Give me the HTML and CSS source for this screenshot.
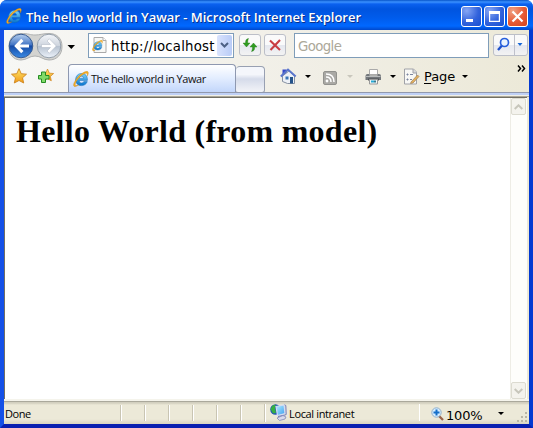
FILE: index.html
```html
<!DOCTYPE html>
<html lang="en">
<head>
<meta charset="utf-8">
<title>The hello world in Yawar</title>
<link rel="stylesheet" href="styles.css">
</head>
<body>
<svg class="defs" width="0" height="0" aria-hidden="true">
  <defs>
    <linearGradient id="eb" x1="0" y1="0" x2="0" y2="1"><stop offset="0" stop-color="#7cd4fa"/><stop offset="1" stop-color="#0874cf"/></linearGradient>
    <linearGradient id="blue" x1="0" y1="0" x2="0" y2="1"><stop offset="0" stop-color="#b8d0ee"/><stop offset=".45" stop-color="#4275c5"/><stop offset=".5" stop-color="#164ba6"/><stop offset="1" stop-color="#3a8be5"/></linearGradient>
    <linearGradient id="silver" x1="0" y1="0" x2="0" y2="1"><stop offset="0" stop-color="#f5f7fa"/><stop offset=".5" stop-color="#ccd3dd"/><stop offset=".52" stop-color="#b7c2d0"/><stop offset="1" stop-color="#edf3fb"/></linearGradient>
    <linearGradient id="gold" x1="0" y1="0" x2="0" y2="1"><stop offset="0" stop-color="#ffe76d"/><stop offset="1" stop-color="#f19a16"/></linearGradient>
    <linearGradient id="screen" x1="0" y1="0" x2="1" y2="1"><stop offset="0" stop-color="#b5efff"/><stop offset="1" stop-color="#3b9df0"/></linearGradient>
    <symbol id="ie" viewBox="0 0 16 16">
      <path d="M14.300 10.600c-1 2.600-3 4-5.900 4-3.600 0-5.800-2.300-5.800-5.800 0-3.700 2.400-6.300 6-6.300 4 0 6.100 2.700 5.800 6.900H6.200c.1 1.600 1 2.600 2.500 2.600 1 0 1.700-.4 2.100-1.400zM6.300 7.200h4.200c-.1-1.300-.8-2-2-2-1.200 0-2 .8-2.200 2z" fill="url(#eb)" stroke="#176bb4" stroke-width=".5"/>
      <path d="M14.300 5.200c1.300-2.400 1.400-4 .3-4.700C12.700-.4 6.700 3.300 3.500 7.800.8 11.600-.2 14.500 1.100 15.400c1 .6 2.900-.2 4.700-1.600-1.600.7-3 1-3.400.5-.7-.9.500-3.500 2.700-6.200 2.800-3.500 6.900-6.400 8.500-5.800.8.300.9 1.400.7 2.900z" fill="#f6ae24" stroke="#bb7b0f" stroke-width=".3"/>
    </symbol>
    <symbol id="star" viewBox="0 0 16 16"><path d="M8 .7l2.200 5 5.300.5-4 3.600 1.200 5.200L8 12.500 3.300 15l1.200-5.200-4-3.600 5.300-.5z" fill="url(#gold)" stroke="#ce841e" stroke-width=".9"/></symbol>
    <symbol id="down" viewBox="0 0 6 3"><path d="M0 0h6L3 3z" fill="currentColor"/></symbol>
  </defs>
</svg>
<div class="window">
  <header class="title">
    <svg class="title-ie" width="16" height="16"><use href="#ie"/></svg>
    <span class="title-text">The hello world in Yawar - Microsoft Internet Explorer</span>
    <div class="controls">
      <button class="min"><svg width="19" height="19"><path d="M4 12h7v3H4z" fill="#fff"/></svg></button>
      <button><svg width="19" height="19"><path d="M4 4h11v11H4zM5.200 7v6.800h8.600V7z" fill="#fff" fill-rule="evenodd"/></svg></button>
      <button class="close"><svg width="19" height="19"><path d="M4.500 4.500l10 10m0-10l-10 10" stroke="#fff" stroke-width="2.200"/></svg></button>
    </div>
  </header>
  <div class="frame">
    <div class="toolbars">
      <div class="nav">
        <svg class="travel" width="68" height="29">
          <path d="M13 1.500C21 1.500 22 3 27 3s8-1.500 14-1.500c8 0 13 5 13 13S49 28 41 28c-6 0-8-4-14-4s-8 4-14 4C5 28 1 22 1 14.500S5 1.500 13 1.500z" fill="#d3d3d0" stroke="#aeb0b0"/>
          <circle cx="13" cy="14" r="11.800" fill="url(#blue)" stroke="#385c93"/>
          <circle cx="41" cy="14" r="11.800" fill="url(#silver)" stroke="#95a0ac"/>
          <path d="M21 12.500v3h-9l3.500 3.500-2.300 2.200-7-7.200 7-7.200L15.500 9 12 12.500z" fill="#fff"/>
          <path d="M33.500 12.500v3h9L39 19l2.300 2.200 7-7.200-7-7.200L39 9l3.500 3.500z" fill="#fff" stroke="#aab3c0" stroke-width=".5"/>
          <path d="M59.500 13h7.500l-3.700 4z" fill="#000"/>
        </svg>
        <div class="address">
          <svg width="16" height="17"><path d="M2 .5h9l3 3v12H2z" fill="#f8f8f5" stroke="#aaa"/><path d="M11 .5v3h3" fill="#fff" stroke="#aaa"/><use href="#ie" x="0" y="3" width="11" height="11"/></svg>
          <span>http://localhost</span>
          <b><svg width="9" height="7"><path d="M1 1l3.500 3.500L8 1" fill="none" stroke="#4d6185" stroke-width="2"/></svg></b>
        </div>
        <button class="tool refresh"><svg width="16" height="16"><path d="M6.500 1.500C4.300 1.800 3.500 3 3.500 6H1l3.500 4L8 6H5.700c0-2 .2-3 .8-4.500zM9.500 14.500c2.300-.3 3.200-1.500 3.200-4.500H15l-3.500-4L8 10h2.500c0 2-.3 3-1 4.500z" fill="#2f9d20" stroke="#23731a" stroke-width=".4"/></svg></button>
        <button class="tool stop"><svg width="16" height="16"><path d="M3 3.500l10 9.500M13 3L3.500 13" stroke="#c93d42" stroke-width="2.100"/></svg></button>
        <div class="search">Google</div>
        <button class="find"><svg width="35" height="22"><path d="M21.500 1v20" stroke="#bfc1cb"/><path d="M8.800 11.800L5 16" stroke="#1d50cb" stroke-width="2.400"/><circle cx="11.500" cy="8.500" r="4" fill="#eaf4ff" stroke="#2860dc" stroke-width="1.700"/><path d="M24.500 9h5l-2.500 3z" fill="#1766d5"/></svg></button>
      </div>
      <div class="tabs">
        <svg class="star" width="16" height="16"><use href="#star"/></svg>
        <svg class="plus" width="17" height="17"><use href="#star" x="3" y="0" width="13" height="14"/><path d="M3.500 4h4v3.500H11V11H7.500v3.500h-4V11H.5V7.500h3z" fill="#80db68" stroke="#258c23"/></svg>
        <div class="tab"><svg width="16" height="16"><use href="#ie"/></svg><span>The hello world in Yawar</span></div>
        <div class="newtab"></div>
        <svg class="home" width="17" height="17"><path d="M2.500 1.500h4V6h-4z" fill="#3448c8"/><path d="M2.500 8L9 3l5.500 5v7.500h-7l-5-2z" fill="#edf1f7" stroke="#8791a2"/><path d="M.8 8.500L8 1.500l7.700 7" fill="none" stroke="#5a76cc" stroke-width="2"/><path d="M10 9h3v6.500h-3z" fill="#24538a"/><path d="M5.500 8.500h3v3h-3z" fill="#3976b8"/></svg>
        <svg class="arrow" width="6" height="3"><use href="#down"/></svg>
        <svg class="rss" width="14" height="14"><rect x=".5" y=".5" width="13" height="13" rx="1.500" fill="#aaa9a5" stroke="#92928e"/><circle cx="4" cy="10" r="1.400" fill="#fff"/><path d="M3 6c3 0 5 2 5 5M3 3c5 0 8 3 8 8" fill="none" stroke="#fff" stroke-width="1.500"/></svg>
        <svg class="arrow pale" width="6" height="3"><use href="#down"/></svg>
        <svg class="printer" width="17" height="17"><path d="M4.500 1.500h8v5h-8z" fill="#fff" stroke="#aaa"/><path d="M.5 8q0-2 2-2h2v1.500h8V6h1.500q2 0 2 2v4H.5z" fill="#73777b"/><path d="M1 8.500h14.500" stroke="#b8bbbc"/><path d="M3 10.500h11v2H3z" fill="#4c5054"/><path d="M4.500 11.500h8v4.500h-8z" fill="#f2f7f7" stroke="#999"/><path d="M6 13.500h3" stroke="#27a9d5" stroke-width="2"/><path d="M9 13.500h2" stroke="#347c92" stroke-width="2"/></svg>
        <svg class="arrow" width="6" height="3"><use href="#down"/></svg>
        <svg class="pageicon" width="17" height="17"><path d="M1.500 1h9l3 3v12h-12z" fill="#f8f8f5" stroke="#a0a2a8"/><path d="M10 1v4h4" fill="#d8d9dd" stroke="#a0a2a8"/><path d="M4 6h1v1H4zm0 5h1v1H4zM7 6.500h3m-3 5h2" fill="#65779c" stroke="#7c86a0"/><path d="M8 14l6.500-7L16 8.500l-6 6.500-2.500.5z" fill="#e4b15c" stroke="#9c8160" stroke-width=".7"/></svg>
        <span class="page-label"><u>P</u>age</span>
        <svg class="arrow" width="6" height="3"><use href="#down"/></svg>
        <svg class="more" width="9" height="7"><path d="M1 .5l2.500 3L1 6.500M5 .5l2.500 3L5 6.500" fill="none" stroke="#000" stroke-width="1.500"/></svg>
      </div>
    </div>
    <div class="band"></div>
    <main>
      <article><h1>Hello World (from model)</h1></article>
      <div class="scroll">
        <div><svg width="9" height="6"><path d="M.7 5L4.500 1.300 8.300 5" fill="none" stroke="#c7c6bb" stroke-width="2"/></svg></div>
        <div><svg width="9" height="6"><path d="M.7 1l3.800 3.700L8.300 1" fill="none" stroke="#c7c6bb" stroke-width="2"/></svg></div>
      </div>
    </main>
    <footer>
      <span class="done">Done</span><i></i><i></i><i></i><i></i><i></i><i></i>
      <div class="zone">
        <svg width="17" height="17"><circle cx="5.500" cy="5.500" r="5.300" fill="#2454b8"/><path d="M.5 5l2-3.500L6 .5 5 4l1 5-3 .5z" fill="#35b043"/><path d="M6 2.500L14 1l1 8.500-7.500 2z" fill="url(#screen)" stroke="#d3dcf3" stroke-width="1.200"/><path d="M14.500.8l1.300.7.400 9-1.200.5L8 12.500" fill="none" stroke="#7078bc"/><path d="M7 14l6-2.500 3 1.500-1 2-5.500 1.500z" fill="#d8daec" stroke="#8088b8" stroke-width=".8"/></svg>
        <span>Local intranet</span>
      </div>
      <div class="zoom">
        <svg width="13" height="14"><path d="M7.500 8.500l4.500 4.500" stroke="#99634a" stroke-width="2.300"/><circle cx="5.500" cy="5.500" r="4.700" fill="#d5edff" stroke="#91afc9"/><path d="M5.500 2.500v6m-3-3h6" stroke="#146fc9" stroke-width="2"/></svg>
        <span>100%</span>
        <svg class="arrow" width="6" height="3"><use href="#down"/></svg>
      </div>
      <svg class="grip" width="12" height="12"><path d="M9 1h2v2H9zM5 5h2v2H5zM9 5h2v2H9zM1 9h2v2H1zM5 9h2v2H5zM9 9h2v2H9z" fill="#b9b6a5"/></svg>
    </footer>
  </div>
</div>
</body>
</html>
```
FILE: styles.css
```css
* { box-sizing: border-box; }
body { margin: 0; background: #fff; overflow: hidden; }
svg { display: block; flex: none; }
button { padding: 0; margin: 0; }
.defs { position: absolute; }
.window { width: 533px; height: 428px; display: flex; flex-direction: column; border-radius: 7px 7px 0 0; overflow: hidden; background: #064be0; }
.title { height: 30px; flex: none; display: flex; padding-left: 6px; background: linear-gradient(#0754c9 0, #3b91ff 2px, #0b61ef 4px, #0054df 9px, #005cec 18px, #0068ff 26px, #0048cc 30px); }
.title-ie { margin-top: 8px; }
.title-text { margin-left: 4px; width: 350px; font: 600 13px/34px "Open Sans", sans-serif; letter-spacing: -.015px; color: #fff; text-shadow: 1px 1px #0a318c; white-space: nowrap; }
.controls { margin: 6px 5px 0 auto; display: flex; gap: 2px; }
.controls button { width: 21px; height: 21px; border: 1px solid #fff; border-radius: 3px; background: radial-gradient(circle at 25% 20%, #86a6f4, #3263dc 55%, #164ed1); }
.controls .close { background: radial-gradient(circle at 25% 20%, #f0a083, #e65a35 55%, #d2441c); }
.frame { flex: 1; border: solid; border-width: 0 4px 4px; border-color: #0831d9 #0339d1 #081fb0 #1450e7; background: #ece9d8; display: flex; flex-direction: column; min-height: 0; }
.toolbars { height: 62px; flex: none; background: linear-gradient(90deg, #f7f7f5, #f1efe7 55%, #ece9d8); }
.nav { height: 31px; display: flex; align-items: flex-start; padding: 2px 1px 0 4px; }
.travel { margin-right: 12px; }
.address { width: 146px; height: 25px; margin-top: 1px; border: 1px solid #7f9db9; background: #fff; display: flex; padding: 3px 1px 1px 3px; font: 13.300px/18px "DejaVu Sans", sans-serif; color: #000; }
.address span { width: 106px; margin-left: 3px; padding-top: 1px; letter-spacing: .2px; white-space: nowrap; }
.address b { width: 15px; height: 21px; margin: -2px 0 0 auto; background: linear-gradient(90deg, #d9e3fd, #b9ccf7); border-radius: 2px; display: grid; place-items: center; }
.tool, .find { height: 22px; margin-top: 2px; border: 1px solid #bcbfc8; border-radius: 3px; background: linear-gradient(#fafafa 48%, #e4e7ef 50%, #f3f3f3); }
.tool { width: 22px; display: grid; place-items: center; }
.refresh { margin-left: 5px; }
.stop { margin-left: 3px; }
.search { width: 195px; height: 25px; margin: 1px 4px 0 8px; padding-left: 3px; border: 1px solid #7f9db9; background: #fff; color: #aca899; font: 13.300px/25px "DejaVu Sans", sans-serif; letter-spacing: -.6px; }
.find { width: 35px; }
.find svg { margin: -1px; }
.tabs { height: 31px; display: flex; padding-left: 7px; }
.star { margin-top: 7px; }
.plus { margin: 7px 0 0 11px; }
.tab { width: 168px; height: 30px; margin: 3px 0 0 13px; padding: 6px 0 0 4px; display: flex; border: 1px solid #8e98b0; border-bottom: 0; border-radius: 4px 4px 0 0; background: linear-gradient(#fff, #e3edff 45%, #bed3fa); font: 11px/16px "Open Sans", sans-serif; color: #111; }
.tab span { margin-left: 2px; letter-spacing: -.45px; white-space: nowrap; }
.newtab { width: 29px; height: 27px; margin: 5px 0 0; border: 1px solid #98a0b2; border-left: 0; border-radius: 4px 4px 3px 3px; background: linear-gradient(#f4f6fb 30%, #d5dbea 48%, #f3f4f8); }
.home { margin: 7px 0 0 15px; }
.arrow { margin-top: 14px; margin-left: 8px; color: #000; }
.pale { color: #c9c7bd; margin-left: 10px; }
.rss { margin: 10px 0 0 12px; }
.printer { margin: 7px 0 0 12px; }
.pageicon { margin: 7px 0 0 7px; }
.page-label { width: 34px; margin-left: 4px; font: 13px/32px "DejaVu Sans", sans-serif; letter-spacing: -.1px; white-space: nowrap; }
.page-label + .arrow { margin-left: 4px; }
.page-label u { text-underline-offset: 2px; }
.more { margin: 4px 3px 0 auto; }
.band { height: 5px; flex: none; background: linear-gradient(#9199ae 0 1px, #bfd0f5 1px 3px, #f0efe7 3px 4px, #aca899 4px); }
main { height: 302px; flex: none; display: flex; border: solid #716f64; border-width: 1px 0 0 1px; margin-right: 2px; background: #fff; }
article { flex: 1; padding: 16px 0 0 11px; }
h1 { margin: 0; font: bold 32px/35px "Liberation Serif", serif; letter-spacing: .26px; white-space: nowrap; }
.scroll { width: 17px; flex: none; border-left: 1px solid #eeede5; background: #fefefb; display: flex; flex-direction: column; justify-content: space-between; }
.scroll div { width: 15px; height: 17px; border: 1px solid #dcdbd0; border-radius: 2px; background: #f4f3ed; display: grid; place-items: center; }
footer { height: 25px; flex: none; display: flex; align-items: flex-start; background: linear-gradient(#f5f4ec 0 2px, #aaa89b 2px 3px, #d2cfbf 3px 4px, #ece9d8 6px, #ece9d8 20px, #d9d5c2); font: 11px/16px "Open Sans", sans-serif; color: #000; }
.done { width: 116px; padding: 7px 0 0 1px; letter-spacing: -.45px; }
footer i { width: 24px; height: 16px; margin-top: 6px; border-left: 1px solid #c9c5b3; box-shadow: inset 1px 0 #fff; }
.zone { width: 155px; height: 18px; margin-top: 5px; display: flex; padding-left: 6px; box-shadow: inset 1px 0 #c9c5b3, inset 2px 0 #fff; }
.zone span { padding-top: 2px; margin-left: 2px; letter-spacing: -.36px; }
.zoom { height: 17px; margin-top: 5px; padding-left: 11px; display: flex; border-left: 1px solid #fff; font: 13px/17px "DejaVu Sans", sans-serif; }
.zoom svg:first-child { margin-top: 3px; }
.zoom span { width: 38px; margin: 3px 0 0 2px; letter-spacing: -.2px; }
.zoom .arrow { margin: 8px 0 0 14px; }
.grip { margin: 12px 1px 0 auto; }
```
